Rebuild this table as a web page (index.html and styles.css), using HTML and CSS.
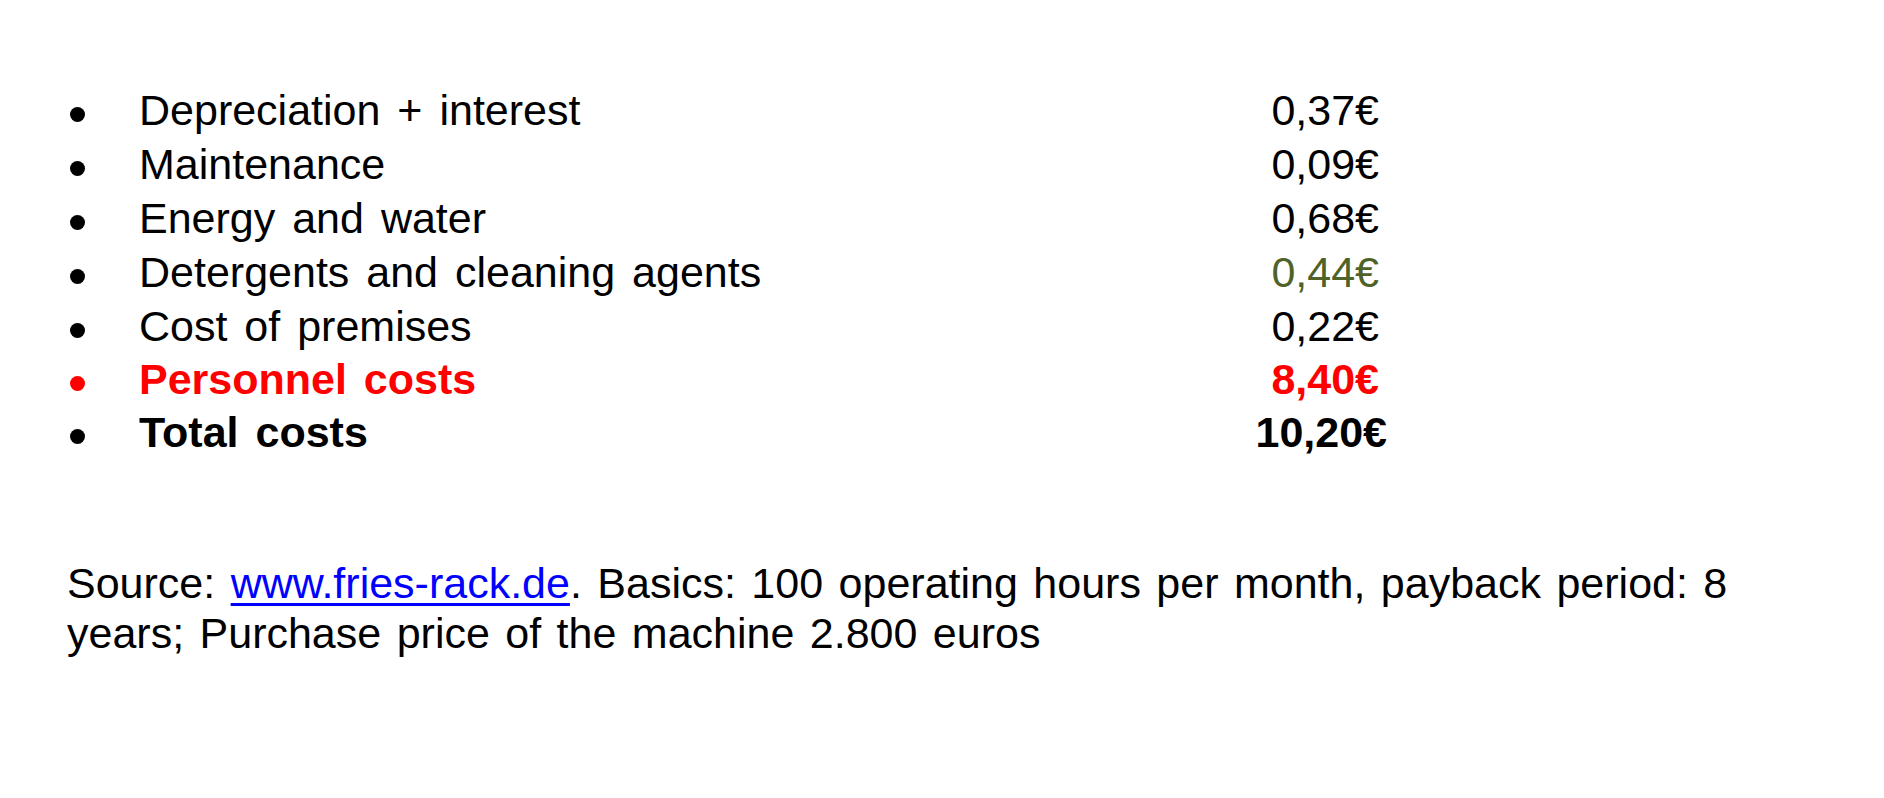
FILE: index.html
```html
<!DOCTYPE html>
<html lang="en">
<head>
<meta charset="utf-8">
<title>Cost breakdown</title>
<link rel="stylesheet" href="styles.css">
</head>
<body>
<main class="slide">
  <ul class="costs">
    <li class="row"><span class="dot"></span><span class="label">Depreciation + interest</span><span class="value">0,37€</span></li>
    <li class="row"><span class="dot"></span><span class="label">Maintenance</span><span class="value">0,09€</span></li>
    <li class="row"><span class="dot"></span><span class="label">Energy and water</span><span class="value">0,68€</span></li>
    <li class="row"><span class="dot"></span><span class="label">Detergents and cleaning agents</span><span class="value value-green">0,44€</span></li>
    <li class="row"><span class="dot"></span><span class="label">Cost of premises</span><span class="value">0,22€</span></li>
    <li class="row row-red"><span class="dot"></span><span class="label">Personnel costs</span><span class="value">8,40€</span></li>
    <li class="row row-total"><span class="dot"></span><span class="label">Total costs</span><span class="value">10,20€</span></li>
  </ul>
  <p class="source">Source: <a class="link" href="#">www.fries-rack.de</a>. Basics: 100 operating hours per month, payback period: 8 years; Purchase price of the machine 2.800 euros</p>
</main>
</body>
</html>
```

FILE: styles.css
```css
html, body {
  margin: 0;
  padding: 0;
  background: #ffffff;
}

body {
  font-family: "Liberation Sans", Arial, sans-serif;
  color: #000000;
  width: 1884px;
  height: 798px;
  overflow: hidden;
}

.slide {
  padding-top: 83px;
}

.costs {
  list-style: none;
  margin: 0 0 0 69.5px;
  padding: 0;
  width: 1309.5px;
}

.row {
  display: grid;
  grid-template-columns: 15px 1fr auto;
  column-gap: 54.5px;
  align-items: center;
  height: 54px;
  font-size: 43px;
  line-height: 54px;
}

.row-red {
  height: 53px;
  margin-top: -1px;
}

.dot {
  width: 15px;
  height: 15px;
  border-radius: 50%;
  background: currentColor;
  margin-top: 8px;
}

.label {
  white-space: nowrap;
  word-spacing: 5px;
}

.value {
  text-align: right;
  white-space: nowrap;
}

.value-green {
  color: #4f6228;
}

.row-red {
  color: #ff0000;
  font-weight: bold;
}

.row-total {
  font-weight: bold;
}

.row-total .value {
  margin-right: -8px;
}

.source {
  margin: 99px 0 0 0;
  padding-left: 67px;
  width: 1720px;
  font-size: 43px;
  line-height: 50px;
  word-spacing: 3.5px;
}

.link {
  color: #0000ff;
  text-decoration: underline;
  text-decoration-thickness: 3px;
  text-underline-offset: 5px;
}
```
